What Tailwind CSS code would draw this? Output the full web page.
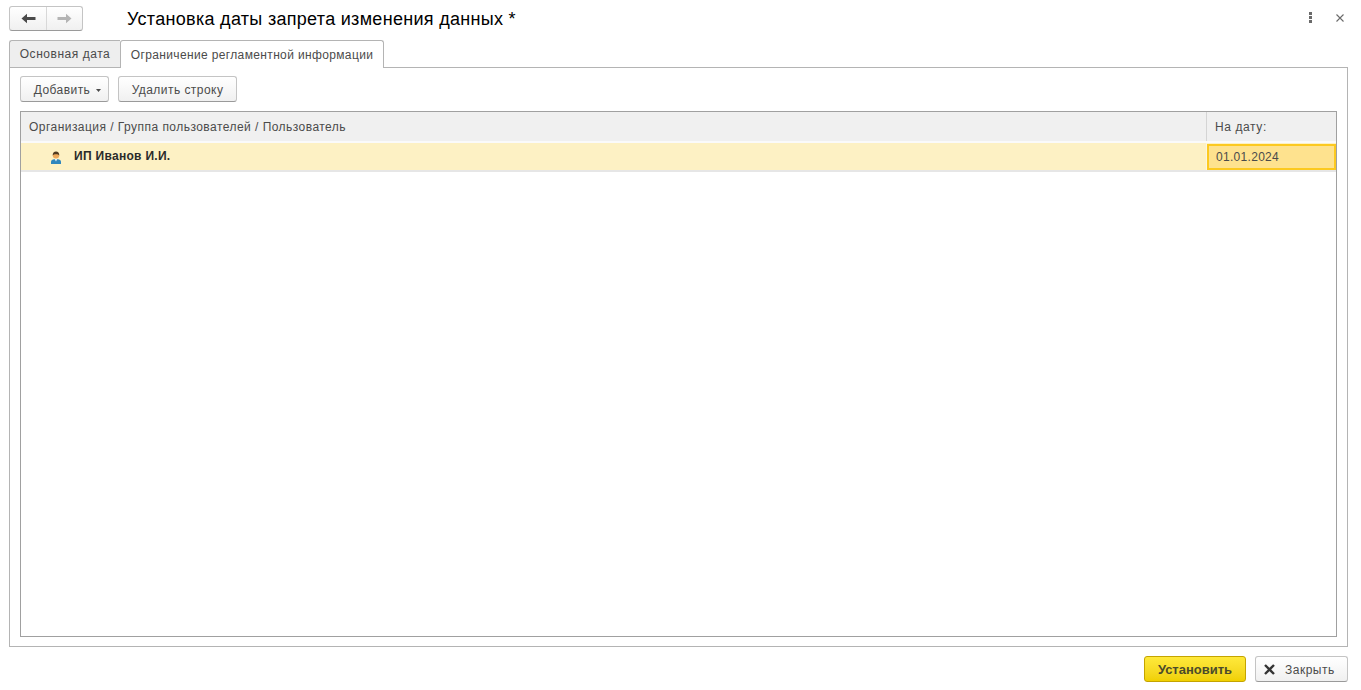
<!DOCTYPE html>
<html lang="ru">
<head>
    <meta charset="UTF-8">
    <title>Установка даты запрета изменения данных</title>
    <script src="https://cdn.jsdelivr.net/npm/@tailwindcss/browser@4"></script>
</head>
<body class="h-[690px] w-[1361px] overflow-hidden bg-white font-['Liberation_Sans',Arial,sans-serif] text-[12px] text-[#4b4b4b]">

    <!-- Title bar -->
    <div class="flex h-[40px] items-start pl-[9px] pr-[17px] pt-[6px]">
        <div class="flex h-[25px] w-[74px] rounded-[3px] border border-[#c4c4c4] border-b-[#9a9a9a] bg-gradient-to-b from-white to-[#f0f0f0]">
            <div class="flex w-[37px] items-center justify-center border-r border-[#d8d8d8]">
                <svg width="15" height="11" viewBox="0 0 15 11"><path d="M0.5 5.5 L6 0.8 V4 H14.5 V7 H6 V10.2 Z" fill="#4a4a4a"/></svg>
            </div>
            <div class="flex flex-1 items-center justify-center">
                <svg width="15" height="11" viewBox="0 0 15 11"><path d="M14.5 5.5 L9 0.8 V4 H0.5 V7 H9 V10.2 Z" fill="#b4b4b4"/></svg>
            </div>
        </div>
        <h1 class="ml-[44px] mt-[1px] text-[18px] leading-[24px] tracking-[0.3px] text-black">Установка даты запрета изменения данных *</h1>
        <div class="ml-auto mt-[6px] flex items-center gap-[24px]">
            <svg width="3" height="11" viewBox="0 0 3 11" fill="#6a6a6a"><rect width="3" height="3"/><rect y="4" width="3" height="3"/><rect y="8" width="3" height="3"/></svg>
            <svg width="8" height="8" viewBox="0 0 8 8" stroke="#6a6a6a" stroke-width="1.1" fill="none"><path d="M0.5 0.5 L7.5 7.5 M7.5 0.5 L0.5 7.5"/></svg>
        </div>
    </div>

    <!-- Tabs -->
    <div class="relative z-10 ml-[9px] flex h-[28px] w-fit">
        <div class="flex h-[28px] w-[111px] items-center justify-center rounded-tl-[3px] border border-r-0 border-[#b4b4b4] bg-[#eeeeee] tracking-[0.53px]">Основная дата</div>
        <div class="flex h-[28px] w-[264px] items-center justify-center rounded-t-[3px] border border-b-0 border-[#b4b4b4] bg-white tracking-[0.36px]">Ограничение регламентной информации</div>
    </div>

    <!-- Panel -->
    <div class="ml-[9px] mr-[13px] -mt-px flex h-[580px] flex-col border border-[#b4b4b4] px-[10px] pt-[8px]">
        <div class="flex gap-[9px]">
            <button class="flex h-[26px] w-[89px] items-center justify-center gap-[6px] rounded-[3px] border border-[#c4c4c4] border-b-[#9a9a9a] bg-gradient-to-b from-white to-[#f0f0f0] pl-[6px] pt-[1px] tracking-[0.45px]">
                Добавить
                <svg width="5" height="3" viewBox="0 0 5 3" class="mt-[1px]"><path d="M0 0 H5 L2.5 3 Z" fill="#4b4b4b"/></svg>
            </button>
            <button class="flex h-[26px] w-[119px] items-center justify-center rounded-[3px] border border-[#c4c4c4] border-b-[#9a9a9a] bg-gradient-to-b from-white to-[#f0f0f0] pt-[1px] tracking-[0.45px]">Удалить строку</button>
        </div>

        <!-- Table -->
        <div class="mt-[9px] flex h-[526px] flex-col border border-[#a0a0a0]">
            <div class="flex h-[31px] border-b-2 border-[#fafafa] bg-[#f0f0f0]">
                <div class="flex flex-1 items-center border-r border-[#d4d4d4] pl-[8px] tracking-[0.46px]">Организация / Группа пользователей / Пользователь</div>
                <div class="flex w-[129px] items-center pl-[8px] tracking-[0.6px]">На дату:</div>
            </div>
            <div class="flex h-[27px] bg-[#fdf1c4]">
                <div class="flex flex-1 items-start border-r border-[#fdf6dc] pl-[30px] pt-[7px]">
                    <svg width="10" height="13" viewBox="0 0 10 13" class="mt-[1px]">
                        <path d="M0 13 V10.5 C0 9 2 8 5 8 C8 8 10 9 10 10.5 V13 Z" fill="#2f86bd"/>
                        <path d="M3.6 8 L5 10.5 L6.4 8 Z" fill="#e6f2f8"/>
                        <circle cx="5" cy="4.2" r="3.2" fill="#eda95c"/>
                        <path d="M1.7 4.4 C1.7 1.6 3 0.4 5 0.4 C7 0.4 8.3 1.6 8.3 4.4 C7.4 2.8 2.6 2.8 1.7 4.4 Z" fill="#4f3b22"/>
                    </svg>
                    <span class="ml-[13px] font-bold leading-[13px] tracking-[0.3px] text-[#2b2b2b]">ИП Иванов И.И.</span>
                </div>
                <div class="mt-[1px] flex w-[129px] items-center border-2 border-[#fcc920] bg-[#fee28e] pl-[7px] tracking-[0.3px]">01.01.2024</div>
            </div>
            <div class="h-[2px] bg-[#e6e6e6]"></div>
        </div>
    </div>

    <!-- Footer buttons -->
    <div class="mr-[13px] mt-[9px] flex justify-end gap-[9px]">
        <button class="flex h-[26px] w-[102px] items-center justify-center rounded-[3px] border border-[#c4a400] bg-gradient-to-b from-[#ffe93a] to-[#f0d000] pt-[1px] text-[13px] font-bold text-[#4b4b2b]">Установить</button>
        <button class="flex h-[26px] w-[93px] items-center gap-[10px] rounded-[3px] border border-[#c4c4c4] border-b-[#9a9a9a] bg-gradient-to-b from-white to-[#f0f0f0] pl-[8px] pt-[1px] tracking-[0.5px]">
            <svg width="11" height="11" viewBox="0 0 11 11" stroke="#333333" stroke-width="2.4" fill="none"><path d="M1 1 L10 10 M10 1 L1 10"/></svg>
            Закрыть
        </button>
    </div>

</body>
</html>
